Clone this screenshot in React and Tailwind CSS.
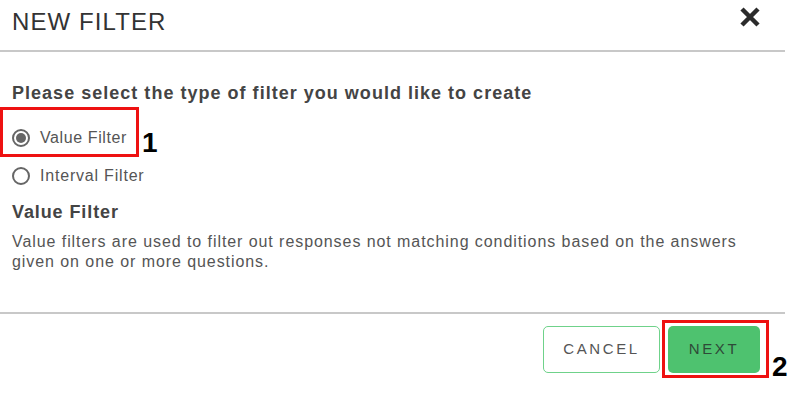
import React from "react";

function Radio({ checked }) {
  return (
    <span className="w-[18px] h-[18px] rounded-full border-2 border-[#666] flex items-center justify-center shrink-0">
      {checked && <span className="w-[10px] h-[10px] rounded-full bg-[#666]" />}
    </span>
  );
}

export default function App() {
  return (
    <div className="w-[800px] h-[405px] bg-white relative overflow-hidden" style={{ fontFamily: '"Liberation Sans", Arial, sans-serif' }}>
      <div className="w-[785px]">
        <div className="h-[52px] border-b-2 border-[#c8c8c8] flex items-center justify-between pl-[12px] pr-[24px]">
          <div className="text-[24px] leading-none text-[#333] tracking-[1.1px] pb-[6px]">NEW FILTER</div>
          <svg width="22" height="22" viewBox="0 0 22 22" className="mb-[17px]">
            <path d="M3 3 L19 19 M19 3 L3 19" stroke="#2b2b2b" strokeWidth="4.5" strokeLinecap="butt" />
          </svg>
        </div>
        <div className="pl-[12px] pt-[29px] h-[260px]">
          <div className="text-[18px] leading-[24px] font-bold text-[#444] tracking-[1.02px]">
            Please select the type of filter you would like to create
          </div>
          <div className="relative mt-[22px] flex items-center gap-[10px] h-[22px]">
            <Radio checked />
            <span className="text-[16px] text-[#555] tracking-[0.6px]">Value Filter</span>
            <div className="absolute left-[-12px] top-[-20px] w-[139px] h-[50px] border-[3px] border-[#ee1111]" />
            <span className="absolute left-[130px] top-[2px] text-[28px] font-bold text-black leading-none">1</span>
          </div>
          <div className="mt-[16px] flex items-center gap-[10px] h-[22px]">
            <Radio />
            <span className="text-[16px] text-[#555] tracking-[0.8px]">Interval Filter</span>
          </div>
          <div className="mt-[13px] text-[18px] leading-[24px] font-bold text-[#444] tracking-[0.9px]">Value Filter</div>
          <div className="mt-[8px] text-[16px] leading-[20px] text-[#555] w-[770px] tracking-[0.93px]">
            Value filters are used to filter out responses not matching conditions based on the answers given on one or more questions.
          </div>
        </div>
        <div className="border-t-2 border-[#c8c8c8] flex justify-end pr-[25px] pt-[12px] gap-[8px]">
          <button className="w-[117px] h-[47px] rounded-[5px] border border-[#6fd28a] text-[15px] tracking-[2.6px] text-[#555] bg-white">
            CANCEL
          </button>
          <div className="relative">
            <button className="w-[92px] h-[47px] rounded-[5px] bg-[#4ec26f] text-[15px] tracking-[2.6px] text-[#2e4a38]">
              NEXT
            </button>
            <div className="absolute left-[-6px] top-[-6px] w-[107px] h-[58px] border-[3px] border-[#ee1111]" />
            <span className="absolute left-[104px] top-[27px] text-[28px] font-bold text-black leading-none">2</span>
          </div>
        </div>
      </div>
    </div>
  );
}
